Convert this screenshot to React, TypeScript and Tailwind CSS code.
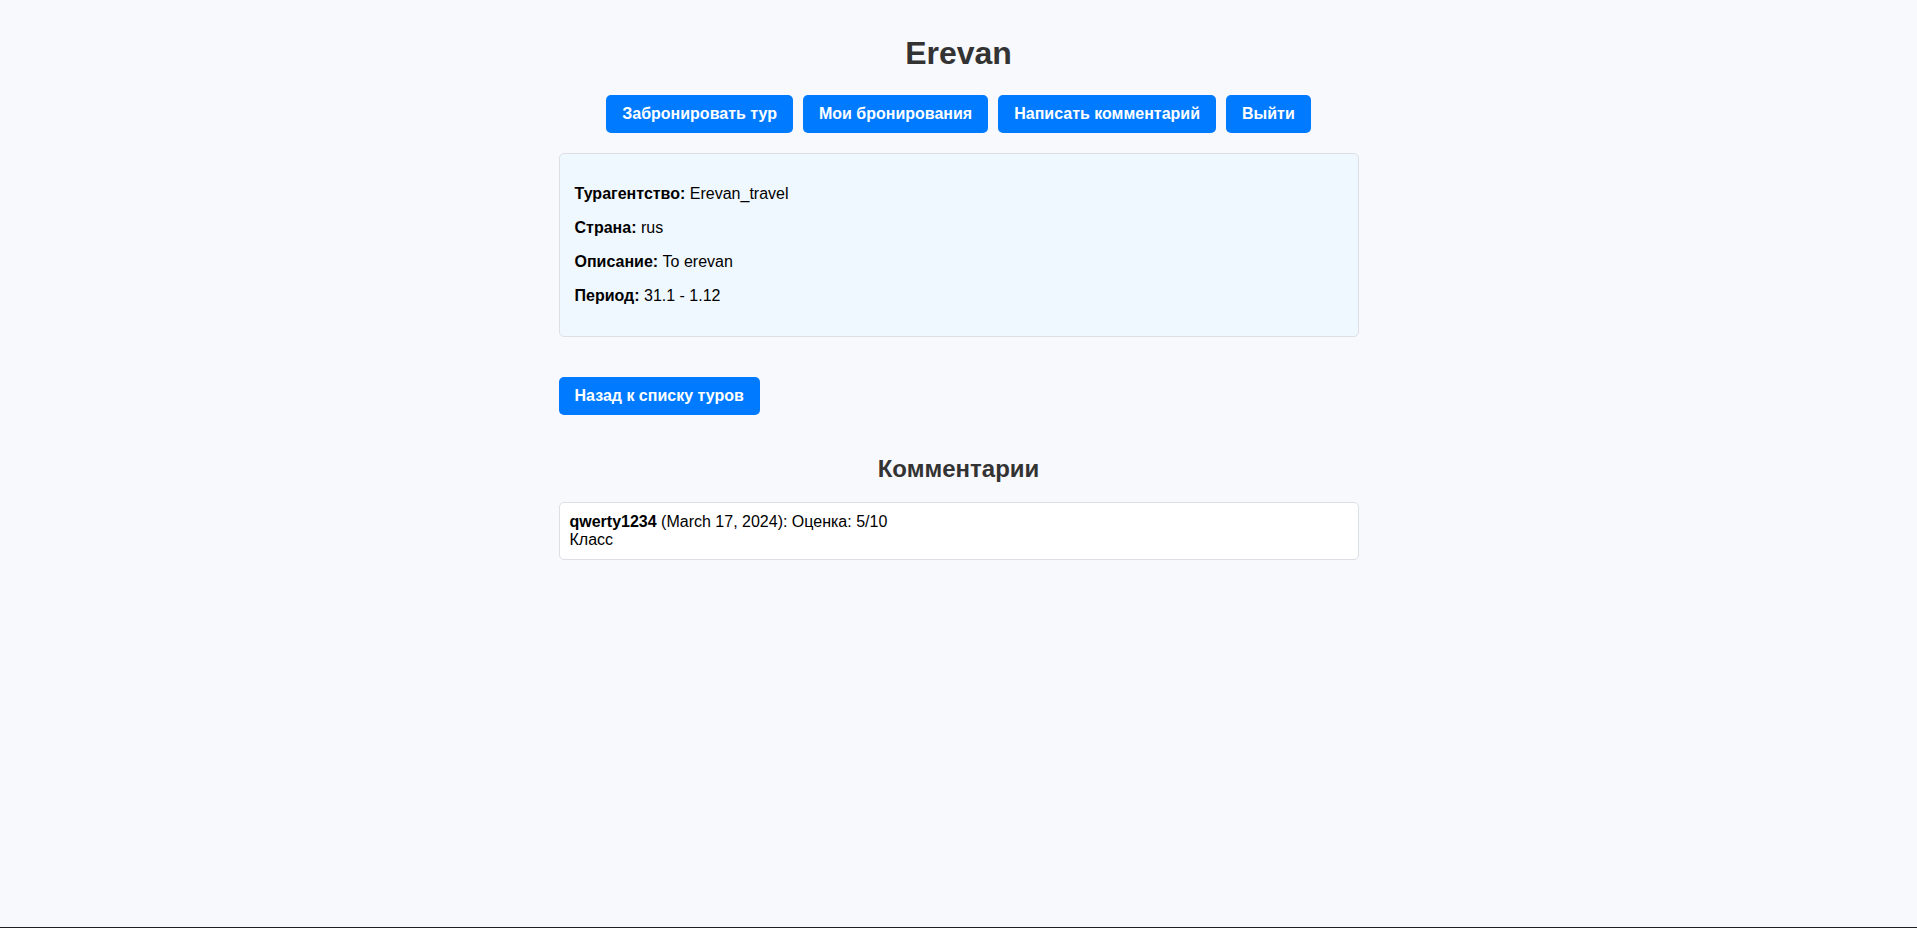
import React from "react";

const btn =
  "h-[38px] px-4 py-[10px] bg-[#007bff] text-white font-bold text-[16px] leading-[18px] rounded-[5px] whitespace-nowrap";

export default function App() {
  return (
    <div
      className="h-[928px] flex flex-col bg-[#f8f9fc] text-black overflow-hidden"
      style={{ fontFamily: '"Liberation Sans", Arial, sans-serif' }}
    >
      <div className="flex-1">
        <div className="w-[800px] mx-auto pt-[35px]">
          <h1 className="text-[32px] leading-[37px] font-bold text-[#333] text-center">
            Erevan
          </h1>
          <div className="mt-[23px] flex justify-center gap-[10px]">
            <button className={btn}>Забронировать тур</button>
            <button className={btn}>Мои бронирования</button>
            <button className={btn}>Написать комментарий</button>
            <button className={btn}>Выйти</button>
          </div>
          <div className="mt-[20px] border border-[#dcdfe3] rounded-[5px] bg-[#f0f8ff] p-[15px] text-[16px] leading-[18px]">
            <p className="my-4">
              <b>Турагентство:</b> Erevan_travel
            </p>
            <p className="my-4">
              <b>Страна:</b> rus
            </p>
            <p className="my-4">
              <b>Описание:</b> To erevan
            </p>
            <p className="my-4">
              <b>Период:</b> 31.1 - 1.12
            </p>
          </div>
          <div className="mt-[40px]">
            <button className={btn}>Назад к списку туров</button>
          </div>
          <h2 className="mt-[40px] text-[24px] leading-[28px] font-bold text-[#333] text-center">
            Комментарии
          </h2>
          <div className="mt-[19px] border border-[#dcdfe3] rounded-[5px] bg-white p-[10px] text-[16px] leading-[18px]">
            <div>
              <b>qwerty1234</b> (March 17, 2024): Оценка: 5/10
            </div>
            <div>Класс</div>
          </div>
        </div>
      </div>
      <div className="h-px bg-[#1c1f26]" />
    </div>
  );
}
